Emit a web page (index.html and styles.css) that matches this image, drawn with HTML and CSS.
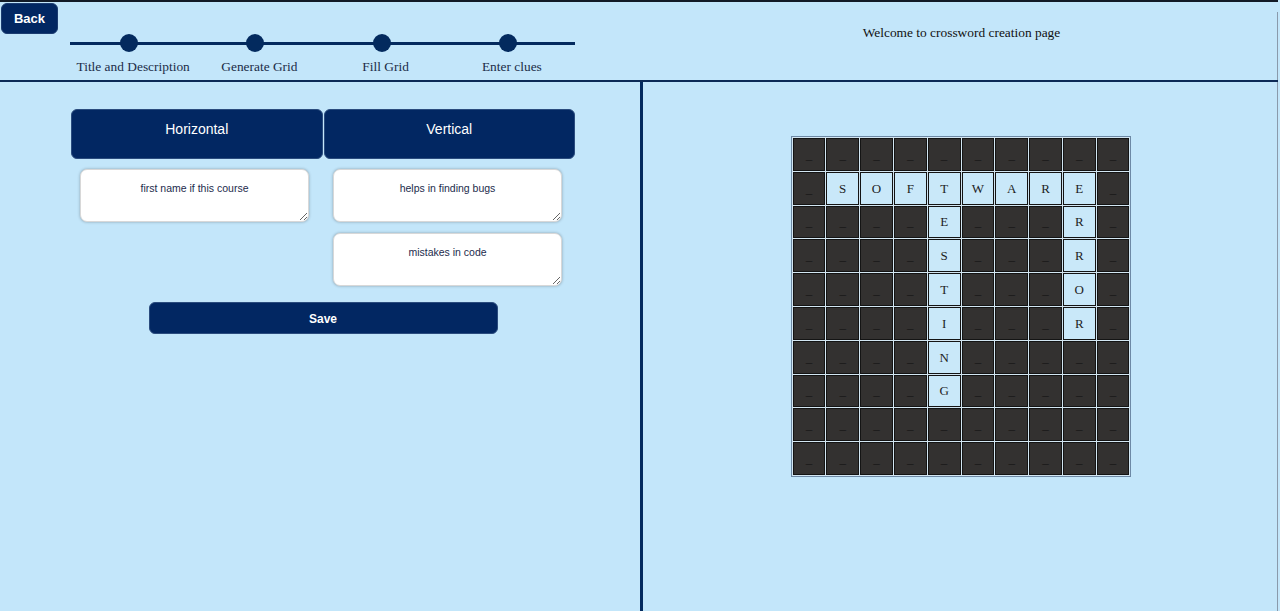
FILE: index.html
```html
<!DOCTYPE html>
<html>
<head>
<meta charset="utf-8">
<link rel="stylesheet" href="styles.css">
</head>
<body>
<div class="page">
  <header class="header">
    <div class="header-left">
      <button class="back-btn">Back</button>
      <div class="stepper">
        <div class="dots">
          <span class="dot-cell"><span class="dot"></span></span>
          <span class="dot-cell"><span class="dot"></span></span>
          <span class="dot-cell"><span class="dot"></span></span>
          <span class="dot-cell"><span class="dot"></span></span>
        </div>
        <div class="labels">
          <span>Title and Description</span>
          <span>Generate Grid</span>
          <span>Fill Grid</span>
          <span>Enter clues</span>
        </div>
      </div>
    </div>
    <div class="header-right">
      <p class="welcome">Welcome to crossword creation page</p>
    </div>
  </header>
  <main class="main">
    <section class="left-panel">
      <div class="tabs">
        <button class="tab">Horizontal</button>
        <button class="tab">Vertical</button>
      </div>
      <div class="clues">
        <div class="clue-col">
          <textarea class="clue">first name if this course</textarea>
        </div>
        <div class="clue-col">
          <textarea class="clue">helps in finding bugs</textarea>
          <textarea class="clue">mistakes in code</textarea>
        </div>
      </div>
      <div class="save-row">
        <button class="save-btn">Save</button>
      </div>
    </section>
    <section class="right-panel">
      <table class="grid" id="grid"></table>
    </section>
  </main>
</div>
<script src="script.js"></script>
</body>
</html>
```
FILE: script.js
```js
(function () {
  var letters = {
    "1,1": "S", "1,2": "O", "1,3": "F", "1,4": "T", "1,5": "W", "1,6": "A", "1,7": "R", "1,8": "E",
    "2,4": "E", "3,4": "S", "4,4": "T", "5,4": "I", "6,4": "N", "7,4": "G",
    "2,8": "R", "3,8": "R", "4,8": "O", "5,8": "R"
  };
  var table = document.getElementById("grid");
  for (var r = 0; r < 10; r++) {
    var tr = document.createElement("tr");
    for (var c = 0; c < 10; c++) {
      var td = document.createElement("td");
      var key = r + "," + c;
      if (letters[key]) {
        td.className = "cell letter";
        td.textContent = letters[key];
      } else {
        td.className = "cell blank";
        td.textContent = "_";
      }
      tr.appendChild(td);
    }
    table.appendChild(tr);
  }
})();
```
FILE: styles.css
```css
html, body {
  margin: 0;
  padding: 0;
  background: #c3e6fa;
}
body {
  font-family: "Liberation Serif", "Times New Roman", serif;
  color: #111;
}
.page {
  width: 1278px;
  height: 611px;
  border-top: 2px solid #121a26;
  box-sizing: border-box;
  display: flex;
  flex-direction: column;
}
.header {
  display: flex;
  height: 80px;
  border-bottom: 2px solid #0c2a56;
  box-sizing: border-box;
}
.header-left {
  width: 640px;
  display: flex;
  flex-direction: column;
  align-items: flex-start;
}
.back-btn {
  margin: 1px 0 0 1px;
  width: 57px;
  height: 31px;
  background: #022762;
  color: #fff;
  border: 1px solid #1c3c70;
  border-radius: 6px;
  font: bold 13px "Liberation Sans", Arial, sans-serif;
  padding: 0;
}
.stepper {
  margin-left: 70px;
  width: 505px;
}
.dots {
  display: grid;
  grid-template-columns: repeat(4, 1fr);
  height: 18px;
  background: linear-gradient(#032a5e, #032a5e) center / 100% 3px no-repeat;
  border-radius: 2px;
}
.dot-cell {
  display: flex;
  justify-content: center;
}
.dot {
  width: 18px;
  height: 18px;
  border-radius: 50%;
  background: #032a5e;
  margin-right: 8px;
}
.labels {
  display: grid;
  grid-template-columns: repeat(4, 1fr);
  margin-top: 7px;
  font-size: 13.4px;
  line-height: 15px;
  color: #1b2c48;
  text-align: center;
}
.header-right {
  flex: 1;
  margin-top: 10px;
  border-right: 1px solid #8a9aab;
  display: flex;
  justify-content: center;
}
.welcome {
  margin: 13px 0 0 6px;
  font-size: 13.4px;
  line-height: 15px;
  color: #111;
}
.main {
  flex: 1;
  display: flex;
}
.left-panel {
  width: 643px;
  border-right: 3px solid #032a5e;
  padding: 27px 0 0 71px;
  box-sizing: border-box;
}
.tabs {
  display: flex;
  gap: 1px;
  width: 504px;
}
.tab {
  flex: 1;
  height: 50px;
  background: #022762;
  color: #fff;
  border: 1px solid #2b4c7e;
  border-radius: 6px;
  font: 14px "Liberation Sans", Arial, sans-serif;
  padding: 11px 0 0;
  display: flex;
  justify-content: center;
  align-items: flex-start;
}
.clues {
  display: flex;
  width: 504px;
  margin-top: 10px;
}
.clue-col {
  flex: 1;
  display: flex;
  flex-direction: column;
  gap: 11px;
  padding-left: 9px;
}
.clue-col + .clue-col {
  padding-left: 11px;
}
.clue {
  width: 229px;
  height: 53px;
  box-sizing: border-box;
  background: #fff;
  border: 1px solid #d8d8d8;
  border-radius: 7px;
  box-shadow: 0 0 3px rgba(0, 0, 0, 0.3);
  font: 10.5px "Liberation Sans", Arial, sans-serif;
  color: #1c2b4c;
  text-align: center;
  padding: 12px 6px 4px;
  margin: 0;
  outline: none;
}
.save-row {
  width: 504px;
  display: flex;
  justify-content: center;
  margin-top: 16px;
}
.save-btn {
  width: 349px;
  height: 32px;
  background: #022762;
  color: #fff;
  border: 1px solid #2b4c7e;
  border-radius: 6px;
  font: bold 12px "Liberation Sans", Arial, sans-serif;
  padding: 2px 0 0;
}
.right-panel {
  flex: 1;
  border-right: 1px solid #8a9aab;
  display: flex;
  justify-content: center;
  align-items: flex-start;
  padding-top: 54px;
}
.grid {
  border-collapse: separate;
  border-spacing: 1px;
  border: 1px solid #6d89a5;
  background: #d3e6f2;
  padding: 0;
  margin-left: 2px;
}
.cell {
  width: 30.8px;
  height: 30.8px;
  padding: 0;
  border: 1px solid #141414;
  text-align: center;
  vertical-align: middle;
  font-size: 13px;
  line-height: 15px;
}
.blank {
  background: #333130;
  color: #151515;
}
.letter {
  background: #c9e8f9;
  color: #1e1e1e;
}
```
